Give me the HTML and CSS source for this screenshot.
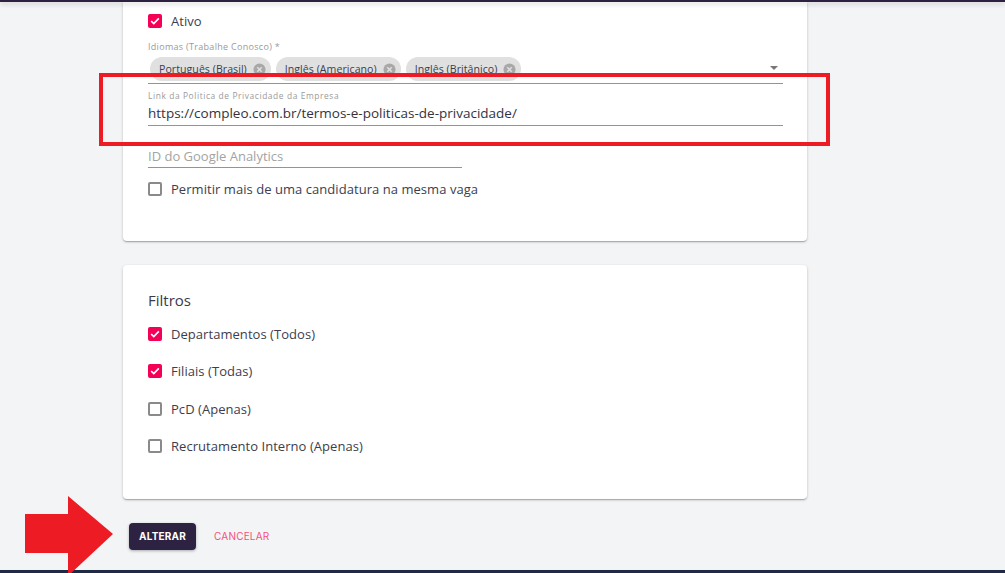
FILE: index.html
```html
<!DOCTYPE html>
<html lang="pt-BR">
<head>
<meta charset="utf-8">
<title>Configurações</title>
<link rel="stylesheet" href="styles.css">
</head>
<body>
<div class="topbar"></div>
<main class="main">
  <section class="card card-top">
    <label class="check-row">
      <span class="box checked"><svg viewBox="0 0 14 14"><path d="M3.2 7.2 L5.8 9.6 L10.8 4.4" fill="none" stroke="#fff" stroke-width="1.6"/></svg></span>
      <span class="check-text">Ativo</span>
    </label>

    <div class="field">
      <div class="label">Idiomas (Trabalhe Conosco) *</div>
      <div class="chips">
        <span class="chip">Português (Brasil)<span class="chip-x"><svg viewBox="0 0 14 14"><circle cx="7" cy="7" r="6.5" fill="#a8a8a8"/><path d="M4.6 4.6 L9.4 9.4 M9.4 4.6 L4.6 9.4" stroke="#e0e0e0" stroke-width="1.6"/></svg></span></span>
        <span class="chip">Inglês (Americano)<span class="chip-x"><svg viewBox="0 0 14 14"><circle cx="7" cy="7" r="6.5" fill="#a8a8a8"/><path d="M4.6 4.6 L9.4 9.4 M9.4 4.6 L4.6 9.4" stroke="#e0e0e0" stroke-width="1.6"/></svg></span></span>
        <span class="chip">Inglês (Britânico)<span class="chip-x"><svg viewBox="0 0 14 14"><circle cx="7" cy="7" r="6.5" fill="#a8a8a8"/><path d="M4.6 4.6 L9.4 9.4 M9.4 4.6 L4.6 9.4" stroke="#e0e0e0" stroke-width="1.6"/></svg></span></span>
        <span class="caret"></span>
      </div>
    </div>

    <div class="field field-link">
      <div class="label label-small">Link da Politica de Privacidade da Empresa</div>
      <div class="input">https://compleo.com.br/termos-e-politicas-de-privacidade/</div>
    </div>

    <div class="field field-ga">
      <div class="input placeholder">ID do Google Analytics</div>
    </div>

    <label class="check-row check-permit">
      <span class="box"></span>
      <span class="check-text">Permitir mais de uma candidatura na mesma vaga</span>
    </label>
  </section>

  <section class="card card-filters">
    <h2 class="card-title">Filtros</h2>
    <div class="check-list">
      <label class="check-row">
        <span class="box checked"><svg viewBox="0 0 14 14"><path d="M3.2 7.2 L5.8 9.6 L10.8 4.4" fill="none" stroke="#fff" stroke-width="1.6"/></svg></span>
        <span class="check-text">Departamentos (Todos)</span>
      </label>
      <label class="check-row">
        <span class="box checked"><svg viewBox="0 0 14 14"><path d="M3.2 7.2 L5.8 9.6 L10.8 4.4" fill="none" stroke="#fff" stroke-width="1.6"/></svg></span>
        <span class="check-text">Filiais (Todas)</span>
      </label>
      <label class="check-row">
        <span class="box"></span>
        <span class="check-text">PcD (Apenas)</span>
      </label>
      <label class="check-row">
        <span class="box"></span>
        <span class="check-text">Recrutamento Interno (Apenas)</span>
      </label>
    </div>
  </section>

  <div class="actions">
    <button class="btn btn-primary" type="button">ALTERAR</button>
    <button class="btn btn-text" type="button">CANCELAR</button>
  </div>
</main>
<div class="footer-bar"></div>

<div class="annot-rect"></div>
<svg class="annot-arrow" viewBox="0 0 90 80" width="90" height="80">
  <polygon points="0,18 43,18 43,0 88,38 43,80 43,57 0,57" fill="#ed1c24"/>
</svg>
</body>
</html>
```

FILE: styles.css
```css
* { box-sizing: border-box; }

html, body {
  margin: 0;
  padding: 0;
}

body {
  position: relative;
  width: 1005px;
  height: 573px;
  overflow: hidden;
  background: #f3f4f6;
  font-family: "Open Sans", "Noto Sans", sans-serif;
  color: #3a3a4a;
}

.topbar {
  height: 2px;
  background: #2d2140;
  box-shadow: 0 2px 5px rgba(0, 0, 0, 0.22);
  position: relative;
  z-index: 2;
}

.main {
  width: 684px;
  margin-left: 123px;
}

.card {
  background: #fff;
  border-radius: 4px;
  box-shadow: 0 1px 3px rgba(0, 0, 0, 0.2), 0 1px 1px rgba(0, 0, 0, 0.12), 0 2px 1px -1px rgba(0, 0, 0, 0.1);
  padding-left: 25px;
  padding-right: 24px;
}

.card-top {
  border-radius: 0 0 4px 4px;
  padding-top: 7px;
  padding-bottom: 40px;
  display: flex;
  flex-direction: column;
}

.check-row {
  display: flex;
  align-items: center;
  height: 24px;
}

.box {
  width: 14px;
  height: 14px;
  border: 2px solid #8a8a8a;
  border-radius: 2px;
  flex: none;
  display: flex;
}

.box.checked {
  border: none;
  background: #f50057;
}

.box svg {
  width: 14px;
  height: 14px;
}

.check-text {
  margin-left: 9px;
  font-size: 13px;
  letter-spacing: 0.05px;
  color: #3d3d4d;
}

.field {
  display: flex;
  flex-direction: column;
}

.label {
  margin-top: 8px;
  font-size: 9px;
  line-height: 12px;
  letter-spacing: 0.3px;
  color: #9a9a9a;
}

.chips {
  margin-top: 4px;
  padding-left: 2px;
  padding-bottom: 2px;
  border-bottom: 1px solid #949494;
  display: flex;
  align-items: center;
  gap: 5px;
}

.chip {
  height: 24px;
  border-radius: 12px;
  background: #e0e0e0;
  display: inline-flex;
  align-items: center;
  padding-left: 9px;
  padding-right: 5px;
  font-size: 10.6px;
  letter-spacing: 0.04px;
  color: #3d3d4d;
}

.chip-x {
  display: inline-flex;
  margin-left: 6px;
}

.chip-x svg {
  width: 13px;
  height: 13px;
}

.caret {
  margin-left: auto;
  margin-right: 5px;
  width: 0;
  height: 0;
  border-left: 4px solid transparent;
  border-right: 4px solid transparent;
  border-top: 4px solid #777;
  margin-top: -2px;
}

.label-small {
  margin-top: 7px;
  font-size: 8.4px;
  line-height: 10px;
  letter-spacing: 0.6px;
}

.input {
  font-size: 13.5px;
  line-height: 20px;
  color: #333340;
  margin-top: 2px;
  padding-bottom: 2px;
  border-bottom: 1px solid #949494;
}

.field-ga {
  width: 314px;
  margin-top: 18px;
}

.placeholder {
  font-size: 13px;
  color: #a3a3a3;
  padding-bottom: 1px;
}

.check-permit {
  margin-top: 9px;
}

.card-filters {
  margin-top: 24px;
  padding-top: 24px;
  padding-bottom: 41px;
}

.card-title {
  margin: 0;
  font-size: 15px;
  font-weight: 400;
  line-height: 22px;
  color: #3a3a4a;
}

.check-list {
  margin-top: 11px;
  display: flex;
  flex-direction: column;
  gap: 13.3px;
}

.actions {
  margin-top: 24px;
  padding-left: 6px;
  display: flex;
  align-items: center;
  gap: 10px;
}

.btn {
  font-family: "Inter", "Roboto", sans-serif;
  font-size: 10px;
  letter-spacing: 0.2px;
  border: none;
  cursor: pointer;
  height: 27px;
}

.btn-primary {
  width: 67px;
  background: #2e2242;
  color: #fff;
  font-weight: 700;
  border-radius: 4px;
  box-shadow: 0 1px 3px rgba(0, 0, 0, 0.3);
}

.btn-text {
  background: transparent;
  color: #f4507c;
  font-weight: 400;
  padding: 0 8px;
}

.footer-bar {
  position: absolute;
  left: 0;
  right: 0;
  bottom: 0;
  height: 3px;
  background: #1f2a44;
}

.annot-rect {
  position: absolute;
  left: 99px;
  top: 73px;
  width: 731px;
  height: 73px;
  border: 4.5px solid #ed1c24;
}

.annot-arrow {
  position: absolute;
  left: 25px;
  top: 496px;
}
```
